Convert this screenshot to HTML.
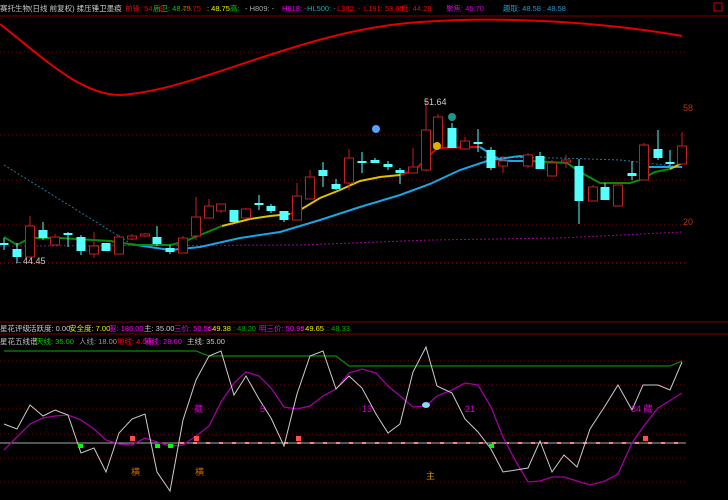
<!DOCTYPE html><html><head><meta charset="utf-8"><style>
body{margin:0;background:#000;width:728px;height:500px;overflow:hidden;font-family:"Liberation Sans","Noto Sans CJK SC",sans-serif;}
.t{position:absolute;font-size:9px;white-space:nowrap;line-height:11px}
.r span{position:absolute;top:0;font-size:7.5px;white-space:nowrap;line-height:11px}
.r{position:absolute;left:0;width:728px;height:11px}
</style></head><body>
<svg width="728" height="500" style="position:absolute;left:0;top:0">
<g stroke="#800000" stroke-dasharray="1,3" stroke-width="1">
<line x1="0" y1="52" x2="686" y2="52"/><line x1="0" y1="135" x2="686" y2="135"/><line x1="0" y1="180" x2="686" y2="180"/><line x1="0" y1="225" x2="686" y2="225"/><line x1="0" y1="263" x2="686" y2="263" stroke="#c00000"/>
<line x1="0" y1="361" x2="686" y2="361"/><line x1="0" y1="385" x2="686" y2="385"/><line x1="0" y1="409" x2="686" y2="409"/><line x1="0" y1="434" x2="686" y2="434"/><line x1="0" y1="458" x2="686" y2="458"/><line x1="0" y1="482" x2="686" y2="482"/>
</g>
<line x1="0" y1="16" x2="728" y2="16" stroke="#800000"/>
<line x1="0" y1="322" x2="728" y2="322" stroke="#800000"/>
<line x1="0" y1="334" x2="728" y2="334" stroke="#800000"/>
<rect x="714" y="3" width="8" height="8" fill="none" stroke="#c00"/>
<path d="M0,24 C40,55 80,95 120,95 C200,90 300,30 420,22 C520,15 620,25 682,36" stroke="#e00000" stroke-width="2" fill="none"/>
<path d="M4,165 L130,243" stroke="#1e7a9a" stroke-dasharray="2,2" fill="none"/>
<path d="M480,157 L560,158 L620,160 L682,167" stroke="#1e7a9a" stroke-dasharray="2,2" fill="none"/>
<path d="M0,246 L300,245 L430,240 L560,238 L682,232" stroke="#a000a0" stroke-dasharray="2,2" fill="none"/>
<polyline points="130,244 170,250 200,247 240,238 280,232 320,220 360,207 400,195 430,184 460,170 490,160 520,156 530,158" stroke="#1aa6e6" stroke-width="2" fill="none"/>
<polyline points="645,167 682,167" stroke="#1aa6e6" stroke-width="2" fill="none"/>
<polyline points="4,237 17,245 30,238 60,238 110,241 135,245 170,245 183,242 222,226" stroke="#0a8a0a" stroke-width="2" fill="none"/>
<polyline points="222,226 250,219 270,216 290,214" stroke="#e0c000" stroke-width="2" fill="none"/>
<polyline points="290,214 300,210" stroke="#e00000" stroke-width="2" fill="none"/>
<polyline points="300,210 320,198 340,190 360,181 380,177 400,175" stroke="#e0c000" stroke-width="2" fill="none"/>
<polyline points="400,175 415,170 437,148 475,147 480,147" stroke="#e00000" stroke-width="2" fill="none"/>
<polyline points="480,147 500,160 510,161 530,161" stroke="#1aa6e6" stroke-width="2" fill="none"/>
<polyline points="530,161 567,163 580,172 600,183 630,183 640,180 655,172 670,169" stroke="#0a8a0a" stroke-width="2" fill="none"/>
<polyline points="670,169 682,163" stroke="#e0c000" stroke-width="2" fill="none"/>
<g id="c"></g>
<polyline points="4,351 196,351 209,356 336,356 349,366 364,366 670,366 682,361" stroke="#0a8a0a" stroke-width="1.2" fill="none"/>
<line x1="0" y1="443" x2="686" y2="443" stroke="#aaa"/>
<line x1="180" y1="443" x2="686" y2="443" stroke="#ff8080" stroke-width="2" stroke-dasharray="4,9"/>
<polyline points="4,450 17,437 30,424 43,418 55,416 68,415 81,420 94,429 106,440 119,444 132,445 145,438 157,442 170,446 183,445 196,436 209,426 221,402 234,383 246,372 259,376 271,388 284,407 297,409 310,406 323,396 336,389 349,373 362,369 376,373 388,386 400,396 413,407 426,406 437,396 452,390 465,383 478,385 491,407 503,437 515,460 528,482 540,481 552,477 564,477 577,481 590,485 605,481 618,474 632,443 643,427 658,408 682,393" stroke="#a000a0" stroke-width="1.3" fill="none"/>
<polyline points="4,424 17,429 30,405 43,416 55,410 68,415 81,453 94,448 106,472 119,433 132,419 145,414 157,472 170,491 183,420 196,380 209,356 221,351 234,395 246,376 259,399 271,418 284,446 297,394 310,356 323,351 336,389 349,376 362,388 376,414 388,433 400,424 413,372 426,347 437,386 452,393 465,419 478,432 491,449 503,472 528,468 540,441 552,472 564,455 577,467 590,429 605,406 618,385 632,410 643,385 658,385 670,390 682,362" stroke="#ccc" stroke-width="1" fill="none"/>
<g fill="#0f0"><rect x="78" y="444" width="5" height="4"/><rect x="155" y="444" width="5" height="4"/><rect x="168" y="444" width="5" height="4"/><rect x="489" y="444" width="5" height="4"/></g>
<g fill="#ff5050"><rect x="130" y="436" width="5" height="5"/><rect x="194" y="436" width="5" height="5"/><rect x="296" y="436" width="5" height="5"/><rect x="643" y="436" width="5" height="5"/></g>
<circle cx="376" cy="129" r="4" fill="#5aa0ff"/><circle cx="437" cy="146" r="4" fill="#e0b000"/><circle cx="452" cy="117" r="4" fill="#1a9a8a"/>
<ellipse cx="426" cy="405" rx="4" ry="3" fill="#8ad8ff"/>
</svg>
<script>
var C=[[4,'c',243,245,238,250],[17,'c',249,257,243,262],[30,'r',226,257,216,257],[43,'c',230,238,222,240],[55,'r',237,245,234,245],[68,'c',233,235,232,247],[81,'c',237,251,235,255],[94,'r',246,254,232,258],[106,'c',243,251,243,251],[119,'r',237,254,235,254],[132,'r',236,239,234,240],[145,'r',234,236,233,237],[157,'c',237,244,226,246],[170,'c',248,252,245,254],[183,'r',238,253,236,253],[196,'r',217,236,197,240],[209,'r',206,218,199,218],[221,'r',204,211,204,213],[234,'c',210,222,210,222],[246,'r',209,218,208,218],[259,'c',203,205,195,210],[271,'c',206,211,204,213],[284,'c',211,220,211,222],[297,'r',196,220,183,220],[310,'r',177,199,170,199],[323,'c',170,176,162,187],[336,'c',184,189,179,190],[349,'r',158,183,149,190],[362,'c',161,163,152,173],[375,'c',160,163,158,163],[388,'c',164,167,161,170],[400,'c',170,173,168,184],[413,'r',167,173,148,173],[426,'r',130,170,100,171],[438,'r',117,148,114,148],[452,'c',128,148,123,148],[465,'r',141,149,137,150],[478,'c',142,144,129,152],[491,'c',150,168,147,170],[503,'r',161,166,156,173],[528,'r',155,166,153,168],[540,'c',156,169,152,169],[552,'r',163,176,160,176],[566,'r',160,162,155,168],[579,'c',166,201,159,224],[593,'r',187,201,185,201],[605,'c',187,200,183,200],[618,'r',185,206,185,206],[632,'c',173,176,161,180],[644,'r',145,180,143,180],[658,'c',149,158,130,160],[670,'c',162,164,150,166],[682,'r',146,164,132,164]];
var s='';C.forEach(function(k){var x=k[0],col=k[1]=='c'?'#5ff':'#c02020';s+='<line x1="'+x+'" x2="'+x+'" y1="'+k[4]+'" y2="'+k[5]+'" stroke="'+col+'"/>';s+='<rect x="'+(x-4.5)+'" y="'+k[2]+'" width="9" height="'+Math.max(2,k[3]-k[2])+'" '+(k[1]=='c'?'fill="#5ff"':'fill="#000" stroke="#c02020"')+'/>';});
document.getElementById('c').innerHTML=s;
</script>
<div class="r" style="top:3px">
<span style="left:0;color:#ccc">赛托生物(日线 前复权) 揉压锤卫墨痕</span>
<span style="left:125px;color:#e00">前锋: 54.49</span>
<span style="left:153px;color:#0c0">后卫: 48.75</span>
<span style="left:178px;color:#e00">: 48.75</span>
<span style="left:207px;color:#ee0">: 48.75</span>
<span style="left:230px;color:#0c0">高:</span>
<span style="left:245px;color:#aaa">- H809: -</span>
<span style="left:282px;color:#e0e">H618: -</span>
<span style="left:307px;color:#1aa">HL500: -</span>
<span style="left:337px;color:#e00">L382: -</span>
<span style="left:364px;color:#e00">L191: 53.65</span>
<span style="left:401px;color:#e00">低: 44.28</span>
<span style="left:446px;color:#c0c">聚焦: 45.70</span>
<span style="left:503px;color:#29c">趣取: 48.58 : 48.58</span>
</div>
<div class="t" style="left:424px;top:97px;color:#ccc">51.64</div>
<div class="t" style="left:14px;top:256px;color:#ccc">←44.45</div>
<div class="t" style="left:683px;top:103px;color:#c03010">58</div>
<div class="t" style="left:683px;top:217px;color:#c03010">20</div>
<div class="r" style="top:323px">
<span style="left:0;color:#ccc">星花评级</span>
<span style="left:29px;color:#ccc">活跃度: 0.00</span>
<span style="left:69px;color:#ee0">安全度: 7.00</span>
<span style="left:109px;color:#e0e">驱: 186.00</span>
<span style="left:144px;color:#ccc">主: 35.00</span>
<span style="left:174px;color:#e0e">三价: 50.56</span>
<span style="left:208px;color:#ee0">: 49.38</span>
<span style="left:233px;color:#0a0">: 48.20</span>
<span style="left:259px;color:#e0e">明三价: 50.98</span>
<span style="left:301px;color:#ee0">: 49.65</span>
<span style="left:327px;color:#0a0">: 48.33</span>
</div>
<div class="r" style="top:336px">
<span style="left:0;color:#ccc">星花五线谱</span>
<span style="left:36px;color:#0c0">天线: 35.00</span>
<span style="left:79px;color:#999">人线: 18.00</span>
<span style="left:117px;color:#f00">地线: 4.00</span>
<span style="left:144px;color:#e0e">辅线: 28.60</span>
<span style="left:187px;color:#ccc">主线: 35.00</span>
</div>
<div class="t" style="left:194px;top:404px;color:#c0c">藏</div>
<div class="t" style="left:260px;top:404px;color:#c0c">5</div>
<div class="t" style="left:362px;top:404px;color:#c0c">13</div>
<div class="t" style="left:465px;top:404px;color:#c0c">21</div>
<div class="t" style="left:631px;top:404px;color:#c0c">34 藏</div>
<div class="t" style="left:131px;top:467px;color:#c60">横</div>
<div class="t" style="left:195px;top:467px;color:#c60">横</div>
<div class="t" style="left:426px;top:471px;color:#c90">主</div>
</body></html>
